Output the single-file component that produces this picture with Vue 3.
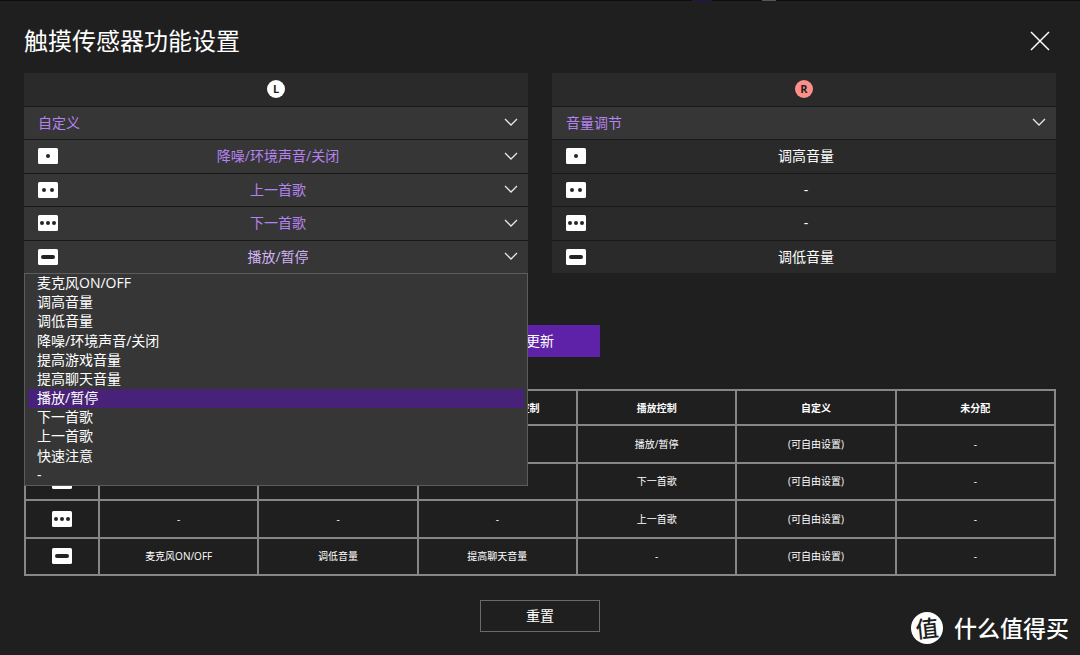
<script setup>
import { ref } from 'vue'

const presets = ['音量调节', '播放控制', '自定义', '未分配']
const leftPreset = ref('自定义')
const rightPreset = ref('音量调节')

const actions = [
  '麦克风ON/OFF', '调高音量', '调低音量', '降噪/环境声音/关闭', '提高游戏音量',
  '提高聊天音量', '播放/暂停', '下一首歌', '上一首歌', '快速注意', '-',
]

const gestures = [
  { id: 'single', name: '轻点一次', dots: [10] },
  { id: 'double', name: '轻点两次', dots: [6, 14] },
  { id: 'triple', name: '轻点三次', dots: [4, 10, 16] },
  { id: 'hold', name: '按住', dots: [] },
]

const leftActions = ref(['降噪/环境声音/关闭', '上一首歌', '下一首歌', '播放/暂停'])
const rightActions = ['调高音量', '-', '-', '调低音量']
const menuOpen = ref(true)

function choose(action) {
  leftActions.value[3] = action
  menuOpen.value = false
}

const headings = ['环境声音控制', '音量调节', '游戏/聊天音量控制', '播放控制', '自定义', '未分配']
const assignments = [
  ['降噪/环境声音/关闭', '调高音量', '提高游戏音量', '播放/暂停', '(可自由设置)', '-'],
  ['-', '-', '-', '下一首歌', '(可自由设置)', '-'],
  ['-', '-', '-', '上一首歌', '(可自由设置)', '-'],
  ['麦克风ON/OFF', '调低音量', '提高聊天音量', '-', '(可自由设置)', '-'],
]
</script>

<template>
  <main class="dialog">
    <div class="edge"></div>
    <header class="head">
      <h1>触摸传感器功能设置</h1>
      <button class="close" type="button" aria-label="关闭">
        <svg width="20" height="20" viewBox="0 0 20 20"><path d="M1 1 19 19M19 1 1 19" /></svg>
      </button>
    </header>

    <div class="panels">
      <section class="panel" aria-label="左">
        <div class="row"><span class="badge">L</span></div>
        <div class="row pick">
          <select v-model="leftPreset" class="preset" aria-label="左侧功能">
            <option v-for="p in presets" :key="p">{{ p }}</option>
          </select>
          <svg class="chevron" width="14" height="9" viewBox="0 0 14 9"><path d="M1 1 7 7 13 1" /></svg>
        </div>
        <div v-for="(g, i) in gestures" :key="g.id" class="row pick">
          <svg class="tap" width="20" height="16" viewBox="0 0 20 16">
            <rect class="plate" width="20" height="16" rx="1.5" />
            <circle v-for="x in g.dots" :key="x" :cx="x" cy="8" r="2" />
            <rect v-if="!g.dots.length" x="3" y="6" width="14" height="4" rx="2" />
          </svg>
          <select v-model="leftActions[i]" class="action" :class="{ active: menuOpen && i === 3 }" :aria-label="g.name">
            <option v-for="a in actions" :key="a">{{ a }}</option>
          </select>
          <svg class="chevron" width="14" height="9" viewBox="0 0 14 9"><path d="M1 1 7 7 13 1" /></svg>
        </div>
        <ul v-if="menuOpen" class="menu" role="listbox" aria-label="按住">
          <li
            v-for="a in actions"
            :key="a"
            role="option"
            :aria-selected="a === leftActions[3]"
            :class="{ chosen: a === leftActions[3] }"
            @click="choose(a)"
          >{{ a }}</li>
        </ul>
      </section>

      <section class="panel" aria-label="右">
        <div class="row"><span class="badge right">R</span></div>
        <div class="row pick">
          <select v-model="rightPreset" class="preset" aria-label="右侧功能">
            <option v-for="p in presets" :key="p">{{ p }}</option>
          </select>
          <svg class="chevron" width="14" height="9" viewBox="0 0 14 9"><path d="M1 1 7 7 13 1" /></svg>
        </div>
        <div v-for="(g, i) in gestures" :key="g.id" class="row">
          <svg class="tap" width="20" height="16" viewBox="0 0 20 16">
            <rect class="plate" width="20" height="16" rx="1.5" />
            <circle v-for="x in g.dots" :key="x" :cx="x" cy="8" r="2" />
            <rect v-if="!g.dots.length" x="3" y="6" width="14" height="4" rx="2" />
          </svg>
          <span class="fixed">{{ rightActions[i] }}</span>
        </div>
      </section>
    </div>

    <button class="btn primary" type="button">更新</button>

    <table>
      <thead>
        <tr>
          <th class="icon-col"></th>
          <th v-for="h in headings" :key="h" scope="col">{{ h }}</th>
        </tr>
      </thead>
      <tbody>
        <tr v-for="(g, i) in gestures" :key="g.id">
          <td>
            <svg class="tap" width="20" height="16" viewBox="0 0 20 16">
              <rect class="plate" width="20" height="16" rx="1.5" />
              <circle v-for="x in g.dots" :key="x" :cx="x" cy="8" r="2" />
              <rect v-if="!g.dots.length" x="3" y="6" width="14" height="4" rx="2" />
            </svg>
          </td>
          <td v-for="(cell, c) in assignments[i]" :key="c">{{ cell }}</td>
        </tr>
      </tbody>
    </table>

    <button class="btn" type="button">重置</button>

    <div class="mark">
      <span class="seal"><span class="glyph">值</span></span>
      <span>什么值得买</span>
    </div>
  </main>
</template>

<style>
body {
  background: #1f1f1f;
}
</style>

<style scoped>
.dialog {
  position: relative;
  box-sizing: border-box;
  min-height: 100vh;
  padding: 0 24px 22px;
  display: flex;
  flex-direction: column;
  align-items: center;
  background: #1f1f1f;
  color: #fff;
  font: 14px/20px "Open Sans", "Noto Sans CJK SC", sans-serif;
}
.edge {
  align-self: stretch;
  height: 1px;
  margin: 0 -24px;
  background: linear-gradient(90deg, #0d0d0d 692px, #2c1150 692px 712px, #0d0d0d 712px 762px, #555 762px 776px, #0d0d0d 776px);
}
.head {
  align-self: stretch;
  box-sizing: border-box;
  height: 72px;
  padding-top: 8px;
  display: flex;
  align-items: center;
  justify-content: space-between;
}
h1 {
  margin: 0;
  font-size: 24px;
  line-height: 32px;
  font-weight: 400;
}
.close {
  padding: 6px;
  border: 0;
  background: none;
}
.close svg, .chevron, .tap { display: block; }
.close path {
  fill: none;
  stroke: #fff;
  stroke-width: 1.5;
}
.panels {
  align-self: stretch;
  display: grid;
  grid-template-columns: 1fr 1fr;
  gap: 24px;
}
.panel {
  position: relative;
  display: grid;
  grid-auto-rows: 1fr;
  gap: 1px;
  min-height: 200px;
  background: #191919;
}
.row {
  position: relative;
  display: flex;
  align-items: center;
  background: #2a2a2a;
}
.row.pick { background: #363636; }
.badge {
  width: 18px;
  height: 18px;
  margin: 0 auto;
  border-radius: 50%;
  background: #fff;
  color: #1f1f1f;
  font-size: 11px;
  line-height: 18px;
  font-weight: 700;
  text-align: center;
}
.badge.right { background: #ff8f8b; }
select {
  flex: 1;
  align-self: stretch;
  min-width: 0;
  border: 0;
  outline: 0;
  appearance: none;
  background: none;
  color: #b583f0;
  font: inherit;
}
select.preset { padding: 0 32px 0 14px; }
select.action {
  padding: 0 30px 0 0;
  text-align: center;
  text-align-last: center;
}
select.active { color: #d2b4f5; }
option {
  background: #363636;
  color: #fff;
}
.chevron {
  position: absolute;
  right: 10px;
  pointer-events: none;
}
.chevron path {
  fill: none;
  stroke: #e8e8e8;
  stroke-width: 1.3;
}
.row .tap { margin-left: 14px; }
.tap { fill: #242424; }
.tap .plate { fill: #fff; }
.fixed {
  flex: 1;
  padding-right: 30px;
  text-align: center;
}
.menu {
  position: absolute;
  z-index: 2;
  top: 100%;
  left: 0;
  right: 0;
  box-sizing: border-box;
  min-height: 213px;
  margin: 0;
  padding: 0 3px;
  display: grid;
  grid-auto-rows: 1fr;
  list-style: none;
  border: 1px solid #5c5c5c;
  background: #363636;
}
.menu li {
  padding-left: 9px;
  line-height: 18px;
}
.menu .chosen { background: #482178; }
.btn {
  box-sizing: border-box;
  width: 120px;
  height: 32px;
  padding: 0;
  border: 1px solid #6a6a6a;
  background: none;
  color: #fff;
  font: inherit;
}
.btn.primary {
  margin: 52px 0 32px;
  border-color: #5e22a8;
  background: #5e22a8;
}
table {
  width: 100%;
  height: 187px;
  margin-bottom: 24px;
  table-layout: fixed;
  border-collapse: collapse;
  font-size: 10px;
  line-height: 16px;
  text-align: center;
}
th, td {
  box-sizing: border-box;
  padding: 0;
  border: 2px solid #868686;
}
th { height: 35px; }
td { height: 37px; }
.icon-col { width: 74px; }
td .tap { margin: 0 auto; }
.mark {
  position: absolute;
  right: 11px;
  bottom: 11px;
  display: flex;
  align-items: center;
  gap: 11px;
  font-size: 23px;
  line-height: 32px;
  font-weight: 500;
}
.seal {
  width: 32px;
  border-radius: 50%;
  background: #fff;
  color: #1f1f1f;
  text-align: center;
}
.glyph {
  display: block;
  transform: rotate(-6deg);
}
</style>
